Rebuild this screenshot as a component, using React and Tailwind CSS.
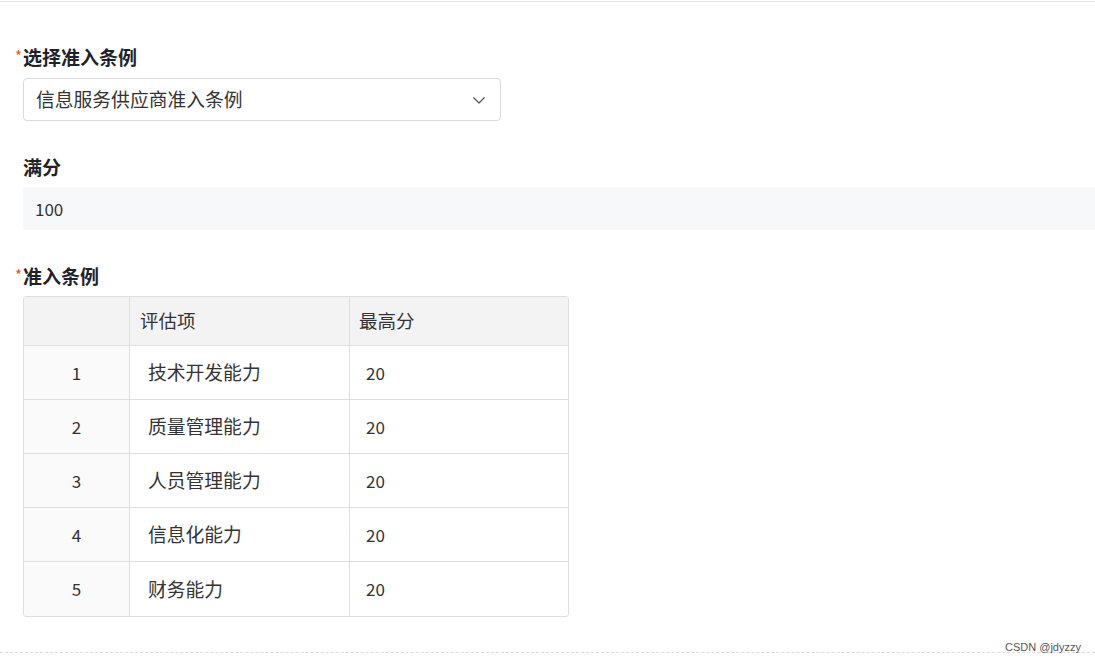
import React from 'react';

const rows = [
  { no: 1, name: '技术开发能力', score: 20 },
  { no: 2, name: '质量管理能力', score: 20 },
  { no: 3, name: '人员管理能力', score: 20 },
  { no: 4, name: '信息化能力', score: 20 },
  { no: 5, name: '财务能力', score: 20 },
];

const Label = ({ required, children }) => (
  <div className="flex items-center h-[24px] text-[19px] font-bold text-[#1f2329] leading-none">
    <span className={`w-[8px] text-[15px] font-normal text-[#e0561f] leading-none -mt-[2px] ${required ? '' : 'invisible'}`}>*</span>
    <span>{children}</span>
  </div>
);

const App = () => (
  <div
    className="relative w-[1095px] h-[662px] bg-white overflow-hidden"
    style={{ fontFamily: '"Microsoft YaHei", "Noto Sans CJK SC", "Noto Sans", sans-serif' }}
  >
    <div className="h-[2px] border-b border-[#e8e8e8]" />

    <div className="pl-[15px] pt-[42px]">
      {/* 选择准入条例 */}
      <Label required>选择准入条例</Label>
      <div className="ml-[8px] mt-[10px] w-[478px] h-[43px] border border-[#d9d9d9] rounded-[4px] flex items-center justify-between pl-[12px] pr-[12px]">
        <span className="text-[18.8px] text-[#333]">信息服务供应商准入条例</span>
        <svg width="18" height="18" viewBox="0 0 24 24" fill="none" stroke="#555" strokeWidth="1.6" strokeLinecap="round" strokeLinejoin="round">
          <path d="M5 9l7 7 7-7" />
        </svg>
      </div>

      {/* 满分 */}
      <div className="mt-[33px]">
        <Label>满分</Label>
      </div>
      <div className="ml-[8px] mt-[9px] h-[43px] bg-[#f7f8fa] flex items-center pl-[12px] text-[17px] text-[#333]">
        100
      </div>

      {/* 准入条例 */}
      <div className="mt-[33px]">
        <Label required>准入条例</Label>
      </div>
      <div className="ml-[8px] mt-[9px] w-[546px] border border-[#dedede] rounded-[3px] overflow-hidden text-[18.5px] text-[#333]">
        <div className="flex h-[49px] bg-[#f3f3f3] border-b border-[#dedede]">
          <div className="w-[106px] border-r border-[#dedede]" />
          <div className="w-[220px] border-r border-[#dedede] flex items-center pl-[10px]">评估项</div>
          <div className="flex-1 flex items-center pl-[9px]">最高分</div>
        </div>
        {rows.map((r, i) => (
          <div key={r.no} className={`flex h-[54px] text-[17px] ${i < rows.length - 1 ? 'border-b border-[#dedede]' : ''}`}>
            <div className="w-[106px] bg-[#fafafa] border-r border-[#dedede] flex items-center justify-center">{r.no}</div>
            <div className="w-[220px] border-r border-[#dedede] flex items-center pl-[18px] text-[18.8px]">{r.name}</div>
            <div className="flex-1 flex items-center pl-[16px]">{r.score}</div>
          </div>
        ))}
      </div>
    </div>

    <div className="absolute left-0 right-0 top-[652px] border-t border-dashed border-[#dcdcdc]" />
    <div
      className="absolute left-[1005px] top-[639px] text-[11px] text-[#555]"
      style={{ fontFamily: '"Liberation Sans", Arial, sans-serif' }}
    >
      CSDN @jdyzzy
    </div>
  </div>
);

export default App;
